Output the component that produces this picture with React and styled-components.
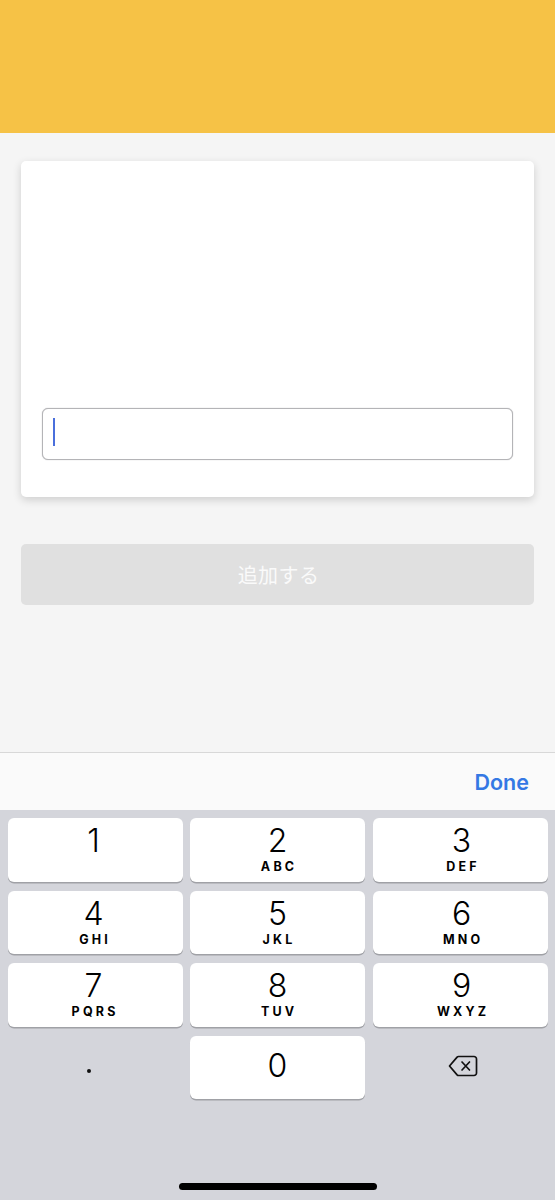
import React from 'react'
import styled, { createGlobalStyle } from 'styled-components'

const GlobalStyle = createGlobalStyle`
    html, body {
        margin: 0;
        padding: 0;
        background: #f5f5f5;
    }
    * {
        box-sizing: border-box;
    }
`;

const Screen = styled.div`
    width: 555px;
    height: 1200px;
    display: flex;
    flex-direction: column;
    overflow: hidden;
    background: #f5f5f5;
    font-family: Inter, "Noto Sans CJK JP", sans-serif;
`;
const Header = styled.div`
    height: 133px;
    flex-shrink: 0;
    background: #f6c246;
`;
const Content = styled.div`
    flex: 1;
    padding: 28px 21px 0;
`;
const Card = styled.div`
    height: 336px;
    padding: 247px 21px 0;
    background: #fff;
    border-radius: 5px;
    box-shadow: 0 3px 8px rgba(0, 0, 0, 0.16);
`;
const Field = styled.div`
    height: 52px;
    padding: 9px 10px;
    background: #fff;
    border: 1px solid #b4b4b7;
    border-radius: 6px;
    box-shadow: 0 0 1px #a8a8ab;
`;
const Caret = styled.div`
    width: 2px;
    height: 28px;
    background: #4a6fdc;
`;
const AddButton = styled.div`
    height: 61px;
    margin-top: 47px;
    padding-left: 2px;
    display: flex;
    align-items: center;
    justify-content: center;
    background: #e0e0e0;
    border-radius: 5px;
    color: #fafafa;
    font-family: "Noto Sans CJK JP", sans-serif;
    font-size: 20px;
    letter-spacing: 0.4px;
`;
const Toolbar = styled.div`
    height: 58px;
    flex-shrink: 0;
    display: flex;
    align-items: center;
    justify-content: flex-end;
    padding: 0 26px 0 0;
    background: #fafafa;
    border-top: 1px solid #d8d8d8;
`;
const Done = styled.span`
    color: #3478e4;
    font-size: 21.5px;
    font-weight: 600;
`;
const Keyboard = styled.div`
    height: 390px;
    flex-shrink: 0;
    position: relative;
    padding: 8px 7.5px 0;
    background: #d4d5db;
`;
const KeyGrid = styled.div`
    display: grid;
    grid-template-columns: repeat(3, 175px);
    grid-auto-rows: 63.5px;
    column-gap: 7.5px;
    row-gap: 9px;
`;
const Key = styled.div`
    display: flex;
    flex-direction: column;
    align-items: center;
    padding-left: ${(props) => (props.$side === 'right' ? '3px' : '0')};
    padding-right: ${(props) => (props.$side === 'left' ? '3px' : '0')};
    background: ${(props) => (props.$plain ? 'transparent' : '#fff')};
    border-radius: 6px;
    box-shadow: ${(props) => (props.$plain ? 'none' : '0 1.5px 0 #a0a1a6')};
    color: #000;
`;
const Digit = styled.div`
    margin-top: ${(props) => (props.$centered ? '10px' : '3px')};
    font-size: 32px;
    font-weight: 350;
    line-height: 39px;
    height: 39px;
`;
const Letters = styled.div`
    font-size: 12.5px;
    font-weight: 700;
    line-height: 14px;
    letter-spacing: 3.2px;
    margin-right: -3.2px;
`;
const Dot = styled.div`
    width: 4px;
    height: 4px;
    margin-top: 33px;
    margin-right: 10px;
    border-radius: 50%;
    background: #111;
`;
const BackspaceIcon = styled.svg`
    width: 30px;
    height: 24px;
    margin-top: 18px;
    margin-left: 3px;
`;
const HomeBar = styled.div`
    position: absolute;
    left: 179px;
    bottom: 10px;
    width: 198px;
    height: 7px;
    border-radius: 4px;
    background: #000;
`;

const keys = [
    ['1', '', 'left'],
    ['2', 'ABC', 'center'],
    ['3', 'DEF', 'right'],
    ['4', 'GHI', 'left'],
    ['5', 'JKL', 'center'],
    ['6', 'MNO', 'right'],
    ['7', 'PQRS', 'left'],
    ['8', 'TUV', 'center'],
    ['9', 'WXYZ', 'right'],
];

export default function App() {
    return (
        <Screen>
            <GlobalStyle />
            <Header />
            <Content>
                <Card>
                    <Field>
                        <Caret />
                    </Field>
                </Card>
                <AddButton>追加する</AddButton>
            </Content>
            <Toolbar>
                <Done>Done</Done>
            </Toolbar>
            <Keyboard>
                <KeyGrid>
                    {keys.map(([digit, letters, side]) => (
                        <Key key={digit} $side={side}>
                            <Digit>{digit}</Digit>
                            <Letters>{letters}</Letters>
                        </Key>
                    ))}
                    <Key $plain $side="left">
                        <Dot />
                    </Key>
                    <Key>
                        <Digit $centered>0</Digit>
                    </Key>
                    <Key $plain $side="right">
                        <BackspaceIcon viewBox="0 0 30 24" fill="none" stroke="#111" strokeWidth="1.7" strokeLinejoin="round" strokeLinecap="round">
                            <path d="M10.500 2.500H26a2.500 2.500 0 0 1 2.500 2.500V19a2.500 2.500 0 0 1-2.500 2.500H10.500a2 2 0 0 1-1.400-.6L1.500 12l7.600-8.900a2 2 0 0 1 1.400-.6Z" />
                            <path d="M14 8l7.500 8M21.500 8L14 16" />
                        </BackspaceIcon>
                    </Key>
                </KeyGrid>
                <HomeBar />
            </Keyboard>
        </Screen>
    )
}
